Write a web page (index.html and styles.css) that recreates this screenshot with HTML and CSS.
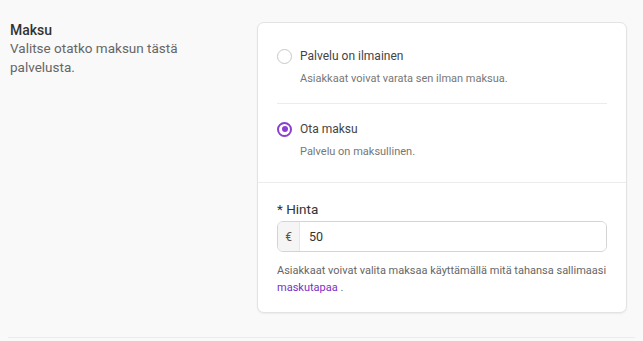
FILE: index.html
```html
<!DOCTYPE html>
<html lang="fi">
<head>
    <meta charset="UTF-8">
    <meta name="viewport" content="width=device-width, initial-scale=1.0">
    <title>Maksu</title>
    <link rel="stylesheet" href="styles.css">
</head>
<body>

<div class="section">
    <div class="intro">
        <h2>Maksu</h2>
        <p>Valitse otatko maksun tästä palvelusta.</p>
    </div>

    <div class="card">
        <div class="options">
            <label class="option">
                <span class="option-row">
                    <input type="radio" name="payment" value="free">
                    <span class="option-title">Palvelu on ilmainen</span>
                </span>
                <span class="option-desc">Asiakkaat voivat varata sen ilman maksua.</span>
            </label>

            <div class="divider"></div>

            <label class="option">
                <span class="option-row">
                    <input type="radio" name="payment" value="paid" checked>
                    <span class="option-title">Ota maksu</span>
                </span>
                <span class="option-desc">Palvelu on maksullinen.</span>
            </label>
        </div>

        <div class="price">
            <label for="price" class="field-label">* Hinta</label>
            <div class="input-group">
                <span class="addon">€</span>
                <input type="text" id="price" name="price" value="50">
            </div>
            <p class="help">Asiakkaat voivat valita maksaa käyttämällä mitä tahansa sallimaasi <a href="#">maskutapaa</a>&nbsp;.</p>
        </div>
    </div>
</div>

<div class="bottom-line"></div>

</body>
</html>
```

FILE: styles.css
```css
body {
    font-family: 'Roboto', 'Noto Sans', sans-serif;
    background-color: #f9f9f9;
    margin: 0;
    color: #333;
}
.section {
    display: flex;
    align-items: flex-start;
    padding: 22px 16px 0 10px;
    height: 314px;
    box-sizing: border-box;
}
.intro {
    width: 247px;
    flex-shrink: 0;
}
.intro h2 {
    font-size: 14px;
    font-weight: 500;
    color: #333;
    margin: 0 0 1px;
    line-height: 16px;
}
.intro p {
    font-size: 13.5px;
    color: #666;
    margin: 0;
    line-height: 19px;
    width: 170px;
}
.card {
    width: 370px;
    height: 291px;
    box-sizing: border-box;
    background-color: white;
    border: 1px solid #e3e3e3;
    border-radius: 7px;
    box-shadow: 0 1px 2px rgba(0, 0, 0, 0.06);
}
.options {
    padding: 23px 19px 0;
    border-bottom: 1px solid #ececec;
    height: 160px;
    box-sizing: border-box;
}
.option {
    display: flex;
    flex-direction: column;
    cursor: pointer;
}
.option-row {
    display: flex;
    align-items: center;
    gap: 8px;
    height: 20px;
}
.option input[type="radio"] {
    appearance: none;
    width: 15px;
    height: 15px;
    margin: 0;
    border: 1px solid #c8c8c8;
    border-radius: 50%;
    background: white;
    position: relative;
}
.option input[type="radio"]:checked {
    border: 2px solid #8a3fd1;
}
.option input[type="radio"]:checked::after {
    content: '';
    position: absolute;
    top: 2.5px;
    left: 2.5px;
    width: 6px;
    height: 6px;
    border-radius: 50%;
    background-color: #8a3fd1;
}
.option-title {
    font-size: 12px;
    color: #444;
}
.option-desc {
    font-size: 11px;
    color: #777;
    margin: 5px 0 0 23px;
    line-height: 16px;
}
.divider {
    height: 1px;
    background-color: #ececec;
    margin: 16px 0 15px;
}
.price {
    padding: 17px 19px 0;
}
.field-label {
    display: block;
    font-size: 13.5px;
    color: #333;
    line-height: 18px;
    margin-bottom: 3px;
}
.input-group {
    display: flex;
    height: 31px;
    box-sizing: border-box;
    border: 1px solid #d4d4d4;
    border-radius: 6px;
    overflow: hidden;
}
.addon {
    width: 21px;
    display: flex;
    align-items: center;
    justify-content: center;
    background-color: #f5f5f5;
    border-right: 1px solid #e6e6e6;
    font-size: 12px;
    color: #555;
}
.input-group input {
    flex: 1;
    border: none;
    outline: none;
    padding: 0 9px;
    font-family: inherit;
    font-size: 12.5px;
    color: #333;
}
.help {
    font-size: 11px;
    color: #666;
    line-height: 17px;
    margin: 10px 0 0;
}
.help a {
    color: #7a2fc4;
    text-decoration: none;
}
.bottom-line {
    height: 1px;
    background-color: #ececec;
    margin: 23px 8px 0;
}
```
